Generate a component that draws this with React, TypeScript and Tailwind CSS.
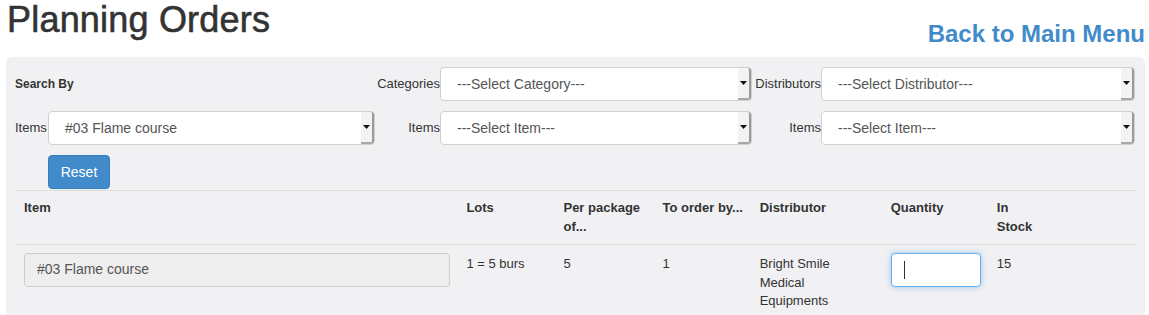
const font = { fontFamily: '"Liberation Sans", Arial, Helvetica, sans-serif' };

const SelectBox = ({ value, className }: { value: string; className: string }) => {
    return (
        <div className={`flex h-[34px] items-stretch rounded-[4px] border border-[#cfcfcf] bg-white ${className}`}>
            <div className="flex flex-1 items-center pl-4 text-[14px] text-[#555]">{value}</div>
            <div className="flex w-[13px] items-center justify-center rounded-r-[3px] border-r-2 border-b-2 border-r-[#9a9a9a] border-b-[#a8a8a8] bg-[#f3f3f3]">
                <svg width="7" height="4" viewBox="0 0 7 4">
                    <path d="M0 0 H7 L3.5 4 Z" fill="#111" />
                </svg>
            </div>
        </div>
    );
};

const Label = ({ text }: { text: string }) => (
    <span className="text-[13px] text-[#333]">{text}</span>
);

export default function App() {
    return (
        <div className="min-h-[315px] bg-white pl-[6px] pr-[4px] text-[#333]" style={font}>
            <div className="flex h-[57px] justify-between">
                <h1 className="pl-[1px] text-[36px] leading-[1.1] tracking-[0.2px] text-[#333] [-webkit-text-stroke:0.6px_#333]">
                    Planning Orders
                </h1>
                <a href="#" className="mt-[21px] text-[24px] font-bold leading-[1.1] text-[#428bca]">
                    Back to Main Menu
                </a>
            </div>

            <div className="rounded-[6px] bg-[#f1f1f3] px-[9px] pt-[10px] pb-4">
                <div className="grid grid-cols-[360px_377px_383px] gap-y-[10px]">
                    <div className="flex items-center">
                        <span className="text-[12px] font-bold">Search By</span>
                    </div>
                    <div className="flex items-center justify-end">
                        <Label text="Categories" />
                        <SelectBox value="---Select Category---" className="w-[312px]" />
                    </div>
                    <div className="flex items-center justify-end">
                        <Label text="Distributors" />
                        <SelectBox value="---Select Distributor---" className="w-[314px]" />
                    </div>

                    <div className="flex items-center">
                        <span className="w-[33px] text-[13px] text-[#333]">Items</span>
                        <SelectBox value="#03 Flame course" className="flex-1" />
                    </div>
                    <div className="flex items-center justify-end">
                        <Label text="Items" />
                        <SelectBox value="---Select Item---" className="w-[312px]" />
                    </div>
                    <div className="flex items-center justify-end">
                        <Label text="Items" />
                        <SelectBox value="---Select Item---" className="w-[314px]" />
                    </div>
                </div>

                <div className="mt-[10px] pl-[33px]">
                    <button className="h-[34px] w-[62px] rounded-[4px] border border-[#357ebd] bg-[#428bca] text-[14px] text-white">
                        Reset
                    </button>
                </div>

                <table className="mt-px w-full table-fixed border-collapse text-[13px] leading-[1.42857]">
                    <colgroup>
                        <col className="w-[443px]" />
                        <col className="w-[97px]" />
                        <col className="w-[99px]" />
                        <col className="w-[97px]" />
                        <col className="w-[131px]" />
                        <col className="w-[106px]" />
                        <col className="w-[147px]" />
                    </colgroup>
                    <thead>
                        <tr className="border-t border-b border-[#dddddd] text-left align-top font-bold">
                            <th className="p-2 pl-[9px]">Item</th>
                            <th className="p-2">Lots</th>
                            <th className="p-2">Per package of...</th>
                            <th className="p-2">To order by...</th>
                            <th className="p-2">Distributor</th>
                            <th className="p-2">Quantity</th>
                            <th className="p-2">
                                <div className="w-[40px]">In Stock</div>
                            </th>
                        </tr>
                    </thead>
                    <tbody>
                        <tr className="align-top">
                            <td className="p-2 pl-[9px]">
                                <div className="flex h-[34px] w-[426px] items-center rounded-[4px] border border-[#cccccc] bg-[#eeeeee] pl-3 text-[14px] text-[#555]">
                                    #03 Flame course
                                </div>
                            </td>
                            <td className="p-2 pt-[10px]">1 = 5 burs</td>
                            <td className="p-2 pt-[10px]">5</td>
                            <td className="p-2 pt-[10px]">1</td>
                            <td className="p-2 pt-[10px]">
                                <div className="w-[105px]">Bright Smile Medical Equipments</div>
                            </td>
                            <td className="p-2">
                                <div className="flex h-[34px] w-[90px] items-center rounded-[4px] border border-[#66afe9] bg-white pl-3 shadow-[0_0_6px_rgba(102,175,233,0.6)]">
                                    <span className="h-[18px] w-px bg-[#333]" />
                                </div>
                            </td>
                            <td className="p-2 pt-[10px]">15</td>
                        </tr>
                    </tbody>
                </table>
            </div>
        </div>
    );
}
